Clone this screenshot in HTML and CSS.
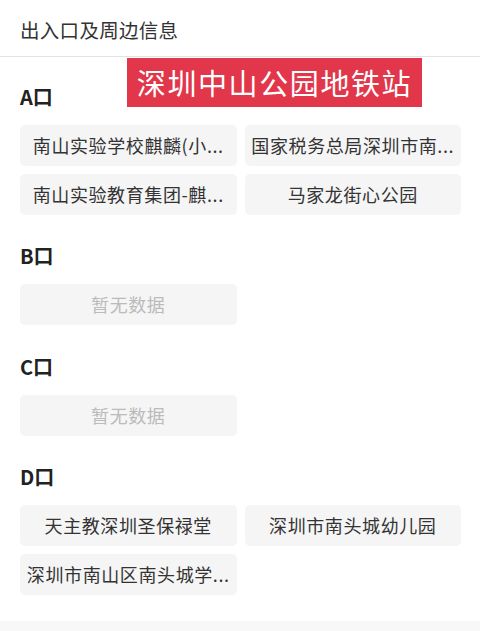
FILE: index.html
```html
<!DOCTYPE html>
<html lang="zh-CN">
<head>
<meta charset="utf-8">
<link rel="stylesheet" href="styles.css">
</head>
<body>
<div class="page">
  <header class="header">出入口及周边信息</header>
  <div class="banner">深圳中山公园地铁站</div>
  <main class="content">
    <section class="section">
      <h2 class="label">A口</h2>
      <div class="grid">
        <div class="item">南山实验学校麒麟(小...</div>
        <div class="item">国家税务总局深圳市南...</div>
        <div class="item">南山实验教育集团-麒...</div>
        <div class="item">马家龙街心公园</div>
      </div>
    </section>
    <section class="section">
      <h2 class="label">B口</h2>
      <div class="grid">
        <div class="item empty">暂无数据</div>
      </div>
    </section>
    <section class="section">
      <h2 class="label">C口</h2>
      <div class="grid">
        <div class="item empty">暂无数据</div>
      </div>
    </section>
    <section class="section">
      <h2 class="label">D口</h2>
      <div class="grid">
        <div class="item">天主教深圳圣保禄堂</div>
        <div class="item">深圳市南头城幼儿园</div>
        <div class="item">深圳市南山区南头城学...</div>
      </div>
    </section>
  </main>
  <footer class="footer"></footer>
</div>
</body>
</html>
```
FILE: styles.css
```css
html, body {
  margin: 0;
  padding: 0;
  background: #ffffff;
}
body {
  font-family: "Noto Sans CJK SC", "Noto Sans", sans-serif;
  color: #333333;
}
.page {
  position: relative;
  width: 480px;
  height: 631px;
  overflow: hidden;
}
.header {
  height: 56px;
  line-height: 60px;
  padding-left: 20px;
  font-size: 19.5px;
  letter-spacing: 0.3px;
  color: #333333;
  border-bottom: 1px solid #e2e2e2;
}
.banner {
  position: absolute;
  left: 127px;
  top: 58px;
  width: 295px;
  height: 49px;
  background: #e2364b;
  color: #ffffff;
  font-size: 29px;
  font-weight: 400;
  letter-spacing: 1.6px;
  line-height: 49px;
  text-align: center;
}
.content {
  padding: 28px 19px 0 20px;
  display: flex;
  flex-direction: column;
  gap: 29.4px;
}
.label {
  margin: 0 0 16px 0;
  height: 24px;
  line-height: 24px;
  font-size: 20px;
  font-weight: 700;
  color: #222222;
}
.grid {
  display: grid;
  grid-template-columns: 1fr 1fr;
  gap: 8px;
}
.item {
  height: 41px;
  line-height: 41px;
  background: #f5f5f5;
  border-radius: 5px;
  padding: 0 6px;
  font-size: 18px;
  letter-spacing: 0.6px;
  color: #333333;
  text-align: center;
  white-space: nowrap;
  overflow: hidden;
}
.item.empty {
  color: #bbbbbb;
}
.footer {
  position: absolute;
  left: 0;
  right: 0;
  bottom: 0;
  height: 10px;
  background: #f8f8f8;
}
```
